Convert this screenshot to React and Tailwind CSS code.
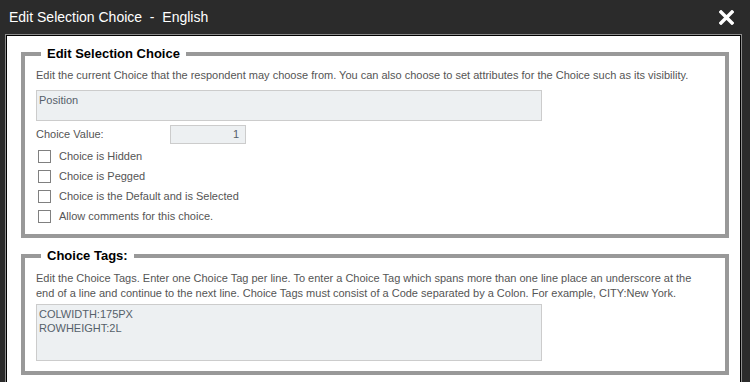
import React from 'react';

const font = { fontFamily: '"Liberation Sans", Arial, sans-serif' };

const options = [
  'Choice is Hidden',
  'Choice is Pegged',
  'Choice is the Default and is Selected',
  'Allow comments for this choice.',
];

const Section = ({ title, children, className = '' }) => (
  <fieldset className={`border-4 border-[#999999] px-[11px] ${className}`}>
    <legend className="ml-[5px] px-[6px] text-[13px] leading-[15px] font-bold text-black">{title}</legend>
    {children}
  </fieldset>
);

export default function App() {
  return (
    <div className="w-[750px] h-[382px] bg-[#2b2b2b] flex flex-col overflow-hidden" style={font}>
      {/* Title bar */}
      <div className="h-[34px] shrink-0 flex items-center justify-between pl-[9px] pr-[16px]">
        <span className="text-white text-[14px] whitespace-pre">Edit Selection Choice  -  English</span>
        <svg width="15" height="15" viewBox="0 0 15 15">
          <path d="M2 2 L13 13 M13 2 L2 13" stroke="#fff" strokeWidth="3.4" strokeLinecap="square" />
        </svg>
      </div>

      {/* Body */}
      <div className="flex-1 ml-[5px] mr-[8px] border-t border-x border-[#8c8c8c] flex flex-col">
        <div className="flex-1 border-t border-x border-black bg-white pl-[14px] pr-[11px] pt-[10px]">
          <Section title="Edit Selection Choice" className="pb-[8px]">
            <p className="mt-[7px] text-[11px] leading-[15px] text-[#555555]">
              Edit the current Choice that the respondent may choose from. You can also choose to set attributes for the Choice such as its visibility.
            </p>
            <div className="mt-[7px] w-[506px] h-[31px] bg-[#edf0f2] border border-[#cccccc] px-[2px] pt-[3px] text-[11px] leading-[13px] text-[#55606a]">
              Position
            </div>
            <div className="mt-[4px] flex items-center h-[19px] text-[11px] text-[#555555]">
              <span className="w-[134px]">Choice Value:</span>
              <div className="w-[76px] h-[19px] bg-[#edf0f2] border border-[#cccccc] flex items-center justify-end pr-[6px] text-[#55606a]">1</div>
            </div>
            <div className="mt-[2px] flex flex-col">
              {options.map((o) => (
                <label key={o} className="h-[20px] flex items-center pl-[2px] text-[11px] text-[#555555]">
                  <span className="w-[13px] h-[13px] border border-[#808080] bg-white" />
                  <span className="ml-[8px]">{o}</span>
                </label>
              ))}
            </div>
          </Section>

          <Section title="Choice Tags:" className="mt-[10px] pb-[10px]">
            <p className="mt-[8px] max-w-[660px] text-[11px] leading-[15px] text-[#555555]">
              Edit the Choice Tags. Enter one Choice Tag per line. To enter a Choice Tag which spans more than one line place an underscore at the end of a line and continue to the next line. Choice Tags must consist of a Code separated by a Colon. For example, CITY:New York.
            </p>
            <div className="mt-[3px] w-[506px] h-[57px] bg-[#edf0f2] border border-[#cccccc] px-[2px] pt-[2px] text-[11px] leading-[14px] text-[#55606a]">
              <div>COLWIDTH:175PX</div>
              <div>ROWHEIGHT:2L</div>
            </div>
          </Section>
        </div>
      </div>
    </div>
  );
}
